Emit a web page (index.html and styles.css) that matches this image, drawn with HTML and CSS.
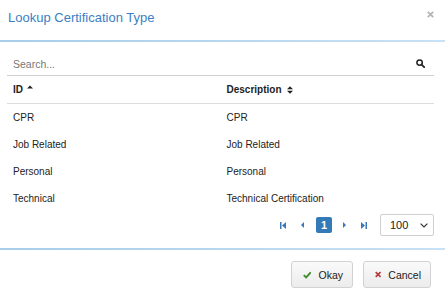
FILE: index.html
```html
<!DOCTYPE html>
<html>
<head>
<meta charset="utf-8">
<link rel="stylesheet" href="styles.css">
</head>
<body>
<div class="modal">
  <div class="modal-header">
    <span class="title">Lookup Certification Type</span>
    <svg class="close" width="7" height="7" viewBox="0 0 7 7"><path d="M0.8 0.8 L6.2 6.2 M6.2 0.8 L0.8 6.2" stroke="#b5b5b5" stroke-width="1.8"/></svg>
  </div>
  <div class="rule"></div>
  <div class="modal-body">
    <div class="search">
      <span class="placeholder">Search...</span>
      <svg class="search-icon" width="9" height="9" viewBox="0 0 9 9"><circle cx="3.6" cy="3.6" r="2.7" fill="none" stroke="#222" stroke-width="1.5"/><path d="M5.6 5.6 L8.2 8.2" stroke="#222" stroke-width="1.8" stroke-linecap="round"/></svg>
    </div>
    <div class="grid head">
      <div class="cell">ID <svg class="sort" width="6" height="4" viewBox="0 0 6 4"><path d="M0 3.5 L3 0.5 L6 3.5Z" fill="#222"/></svg></div>
      <div class="cell">Description <svg class="sort2" width="6" height="8" viewBox="0 0 6 8"><path d="M0 3.2 L3 0.2 L6 3.2Z M0 4.8 L3 7.8 L6 4.8Z" fill="#222"/></svg></div>
    </div>
    <div class="grid row"><div class="cell">CPR</div><div class="cell">CPR</div></div>
    <div class="grid row"><div class="cell">Job Related</div><div class="cell">Job Related</div></div>
    <div class="grid row"><div class="cell">Personal</div><div class="cell">Personal</div></div>
    <div class="grid row"><div class="cell">Technical</div><div class="cell">Technical Certification</div></div>
    <div class="pager">
      <svg class="pg first" width="6" height="7" viewBox="0 0 6 7"><rect x="0" y="0" width="1.5" height="7" fill="#3b78b8"/><path d="M6 0 L2 3.5 L6 7Z" fill="#3b78b8"/></svg>
      <svg class="pg prev" width="3" height="6" viewBox="0 0 3 6"><path d="M3 0 L0 3 L3 6Z" fill="#3b78b8"/></svg>
      <span class="page">1</span>
      <svg class="pg next" width="3" height="6" viewBox="0 0 3 6"><path d="M0 0 L3 3 L0 6Z" fill="#3b78b8"/></svg>
      <svg class="pg last" width="6" height="7" viewBox="0 0 6 7"><path d="M0 0 L4 3.5 L0 7Z" fill="#3b78b8"/><rect x="4.5" y="0" width="1.5" height="7" fill="#3b78b8"/></svg>
      <div class="select">
        <span>100</span>
        <svg width="8" height="5" viewBox="0 0 8 5"><path d="M0.6 0.6 L4 4 L7.4 0.6" fill="none" stroke="#333" stroke-width="1.2"/></svg>
      </div>
    </div>
  </div>
  <div class="rule"></div>
  <div class="modal-footer">
    <button class="btn"><svg width="9" height="8" viewBox="0 0 9 8"><path d="M0.8 4.2 L3.3 6.6 L8.2 1.2" fill="none" stroke="#3f8b2a" stroke-width="2"/></svg><span>Okay</span></button>
    <button class="btn"><svg width="7" height="7" viewBox="0 0 7 7"><path d="M0.8 0.8 L6.2 6.2 M6.2 0.8 L0.8 6.2" stroke="#b93a3a" stroke-width="1.9"/></svg><span>Cancel</span></button>
  </div>
</div>
</body>
</html>
```
FILE: styles.css
```css
* { box-sizing: border-box; }
html, body { margin: 0; padding: 0; background: #fff; }
body { font-family: "Liberation Sans", Arial, sans-serif; color: #333; width: 445px; height: 298px; overflow: hidden; }

.modal { display: flex; flex-direction: column; }

.modal-header {
  height: 40px;
  display: flex;
  align-items: center;
  justify-content: space-between;
  padding: 0 12px 6px 8px;
}
.title { font-size: 13px; color: #3b80c3; }
.close { margin-top: -6px; margin-right: -1px; }

.rule {
  height: 2px;
  background: linear-gradient(to right, #a7cdea, #c8e1f4);
}

.modal-body { padding: 10px 11px 12px 7px; }

.search {
  height: 24px;
  border-bottom: 1px solid #d0d0d0;
  display: flex;
  align-items: center;
  justify-content: space-between;
  padding: 0 9px 0 6px;
  font-size: 10.5px;
}
.placeholder { color: #777; }

.grid { display: grid; grid-template-columns: 1fr 1fr; font-size: 10px; }
.cell { padding: 0 6px; display: flex; align-items: center; }
.head { height: 28px; border-bottom: 1px solid #dcdcdc; font-weight: bold; color: #222; }
.row { height: 27px; color: #222; }
.sort { margin-left: 4px; margin-top: -5px; }
.sort2 { margin-left: 5px; margin-top: 0; }

.pager {
  display: flex;
  align-items: center;
  justify-content: flex-end;
  padding-top: 2px;
}
.pg { display: block; }
.first { margin-right: 15px; }
.prev { margin-right: 12px; }
.page {
  width: 16px; height: 16px;
  background: #337ab7;
  color: #fff;
  border-radius: 2px;
  font-size: 11px;
  font-weight: bold;
  display: flex; align-items: center; justify-content: center;
  margin-right: 11px;
}
.next { margin-right: 15px; }
.last { margin-right: 13px; }
.select {
  width: 54px; height: 22px;
  border: 1px solid #cfcfcf;
  border-radius: 2px;
  display: flex; align-items: center; justify-content: space-between;
  padding: 0 5px 0 9px;
  font-size: 11px;
  color: #222;
}

.modal-footer {
  display: flex;
  justify-content: flex-end;
  gap: 10px;
  padding: 11px 14px 0 0;
}
.btn {
  height: 27px;
  border: 1px solid #d2d2d2;
  border-radius: 3px;
  background: linear-gradient(#fafafa, #ececec);
  font-family: "Liberation Sans", Arial, sans-serif;
  font-size: 10.5px;
  color: #222;
  display: flex; align-items: center;
  padding: 0 9px 0 11px;
  gap: 7px;
}
.btn:first-child { width: 62px; }
.btn:last-child { width: 68px; }
```
